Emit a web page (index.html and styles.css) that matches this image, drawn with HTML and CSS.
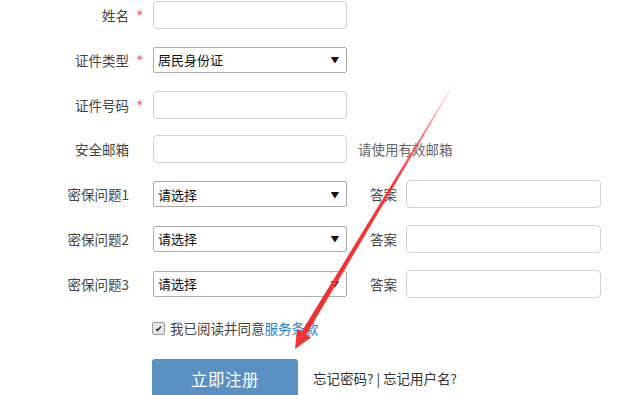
FILE: index.html
```html
<!DOCTYPE html>
<html lang="zh-CN">
<head>
<meta charset="utf-8">
<link rel="stylesheet" href="styles.css">
</head>
<body>
<div class="page">
  <form class="form">
    <div class="row">
      <label class="label">姓名</label><span class="star">*</span>
      <div class="input"></div>
    </div>
    <div class="row">
      <label class="label">证件类型</label><span class="star">*</span>
      <div class="select"><span class="select-text">居民身份证</span><span class="caret">▼</span></div>
    </div>
    <div class="row">
      <label class="label">证件号码</label><span class="star">*</span>
      <div class="input"></div>
    </div>
    <div class="row">
      <label class="label">安全邮箱</label><span class="star blank"></span>
      <div class="input"></div>
      <span class="hint">请使用有效邮箱</span>
    </div>
    <div class="row">
      <label class="label">密保问题1</label><span class="star blank"></span>
      <div class="select"><span class="select-text">请选择</span><span class="caret">▼</span></div>
      <span class="answer-label">答案</span>
      <div class="input answer"></div>
    </div>
    <div class="row">
      <label class="label">密保问题2</label><span class="star blank"></span>
      <div class="select"><span class="select-text">请选择</span><span class="caret">▼</span></div>
      <span class="answer-label">答案</span>
      <div class="input answer"></div>
    </div>
    <div class="row">
      <label class="label">密保问题3</label><span class="star blank"></span>
      <div class="select"><span class="select-text">请选择</span><span class="caret">▼</span></div>
      <span class="answer-label">答案</span>
      <div class="input answer"></div>
    </div>
    <div class="agree">
      <span class="checkbox"><span class="check">✔</span></span>
      <span class="agree-text">我已阅读并同意<a class="link">服务条款</a></span>
    </div>
    <div class="actions">
      <div class="btn">立即注册</div>
      <span class="forgot">忘记密码? | 忘记用户名?</span>
    </div>
  </form>
  <svg class="arrow" width="620" height="395" viewBox="0 0 620 395">
    <defs>
      <linearGradient id="fade" x1="456" y1="80" x2="304" y2="333" gradientUnits="userSpaceOnUse">
        <stop offset="0" stop-color="#ff3b3b" stop-opacity="0"/>
        <stop offset="0.22" stop-color="#ff3b3b" stop-opacity="0.7"/>
        <stop offset="0.42" stop-color="#fa3434" stop-opacity="1"/>
        <stop offset="1" stop-color="#f03030" stop-opacity="1"/>
      </linearGradient>
    </defs>
    <polygon points="456.4,80.2 455.6,79.8 301.4,332 306.2,334.8" fill="url(#fade)"/>
    <polygon points="295,349 297,329 311,337.5" fill="#f03333"/>
  </svg>
</div>
</body>
</html>
```
FILE: styles.css
```css
html, body {
  margin: 0;
  padding: 0;
  background: #ffffff;
}
body {
  font-family: "Noto Sans CJK SC", "Noto Sans", "Liberation Sans", sans-serif;
  font-size: 13.5px;
  color: #333;
}
.page {
  position: relative;
  width: 620px;
  height: 395px;
  overflow: hidden;
}
.form {
  display: flex;
  flex-direction: column;
  gap: 16.8px;
  padding-top: 1px;
}
.row {
  display: flex;
  align-items: center;
  height: 28px;
}
.label {
  width: 129px;
  text-align: right;
  color: #444;
  white-space: nowrap;
}
.star {
  width: 24px;
  padding-left: 7px;
  box-sizing: border-box;
  color: #f06a6a;
  font-size: 16px;
  line-height: 1;
  position: relative;
  top: 1px;
}
.input {
  width: 194px;
  height: 28px;
  box-sizing: border-box;
  border: 1px solid #d2d2d2;
  border-radius: 4px;
  background: #fff;
}
.select {
  width: 194px;
  height: 26px;
  box-sizing: border-box;
  border: 1px solid #ababab;
  border-radius: 2px;
  background: #fff;
  display: flex;
  align-items: center;
  justify-content: space-between;
  padding: 0 7px 0 4px;
}
.select-text {
  color: #111;
  font-size: 13px;
}
.caret {
  font-size: 8px;
  color: #111;
  transform: scaleX(1.1);
}
.hint {
  margin-left: 11px;
  color: #666;
}
.answer-label {
  margin-left: 23px;
  width: 27px;
  color: #444;
  white-space: nowrap;
}
.answer {
  margin-left: 9px;
  width: 195px;
}
.agree {
  display: flex;
  align-items: center;
  height: 24px;
  margin-top: 1px;
  padding-left: 152px;
}
.checkbox {
  width: 11px;
  height: 11px;
  border: 1px solid #9a9a9a;
  border-radius: 2px;
  background: #e6e6e6;
  display: flex;
  align-items: center;
  justify-content: center;
  position: relative;
  top: 1px;
}
.check {
  font-size: 9px;
  line-height: 1;
  color: #222;
}
.agree-text {
  margin-left: 5px;
  color: #444;
}
.link {
  color: #2b7bd6;
}
.actions {
  display: flex;
  align-items: flex-start;
  padding-left: 152px;
  margin-top: 3px;
}
.btn {
  width: 146px;
  height: 40px;
  border-radius: 3px;
  background: #5b91c2;
  color: #fff;
  font-size: 16.5px;
  letter-spacing: 0.5px;
  display: flex;
  align-items: center;
  justify-content: center;
}
.forgot {
  margin-left: 15px;
  margin-top: 9px;
  color: #333;
}
.arrow {
  position: absolute;
  left: 0;
  top: 0;
  pointer-events: none;
}
```
